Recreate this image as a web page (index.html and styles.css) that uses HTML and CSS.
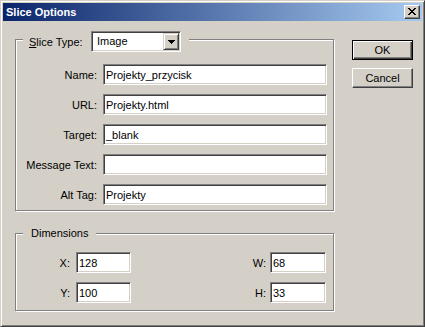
FILE: index.html
```html
<!DOCTYPE html>
<html lang="en">
<head>
  <meta charset="UTF-8" />
  <title>Slice Options</title>
  <link rel="stylesheet" href="styles.css">
</head>
<body>
  <div class="window">
    <div class="titlebar">
      <span class="title">Slice Options</span>
      <button class="close" type="button">
        <svg width="8" height="7" viewBox="0 0 8 7" shape-rendering="crispEdges">
          <path d="M0 0h2v1h-2zM6 0h2v1h-2zM1 1h2v1h-2zM5 1h2v1h-2zM2 2h4v1h-4zM3 3h2v1h-2zM2 4h4v1h-4zM1 5h2v1h-2zM5 5h2v1h-2zM0 6h2v1h-2zM6 6h2v1h-2z" fill="#000"/>
        </svg>
      </button>
    </div>

    <div class="body">
      <div class="main">
        <!-- Slice Type -->
        <div class="group group-slice">
          <div class="legend legend-slice">
            <span class="slice-label"><u>S</u>lice Type:</span>
            <div class="select">
              <span class="select-value">Image</span>
              <span class="select-btn">
                <svg width="7" height="4" viewBox="0 0 7 4" shape-rendering="crispEdges">
                  <path d="M0 0h7v1h-7zM1 1h5v1h-5zM2 2h3v1h-3zM3 3h1v1h-1z" fill="#000"/>
                </svg>
              </span>
            </div>
          </div>

          <div class="fields">
            <label class="lbl">Name:</label>
            <input class="field" type="text" value="Projekty_przycisk">
            <label class="lbl">URL:</label>
            <input class="field" type="text" value="Projekty.html">
            <label class="lbl">Target:</label>
            <input class="field" type="text" value="_blank">
            <label class="lbl">Message Text:</label>
            <input class="field" type="text" value="">
            <label class="lbl">Alt Tag:</label>
            <input class="field" type="text" value="Projekty">
          </div>
        </div>

        <!-- Dimensions -->
        <div class="group group-dims">
          <div class="legend legend-dims">Dimensions</div>
          <div class="dim-row">
            <label class="dim-lbl">X:</label>
            <input class="field dim-x" type="text" value="128">
            <label class="dim-lbl dim-lbl-r">W:</label>
            <input class="field dim-w" type="text" value="68">
          </div>
          <div class="dim-row">
            <label class="dim-lbl">Y:</label>
            <input class="field dim-x" type="text" value="100">
            <label class="dim-lbl dim-lbl-r">H:</label>
            <input class="field dim-w" type="text" value="33">
          </div>
        </div>
      </div>

      <div class="actions">
        <button class="btn btn-default" type="button">OK</button>
        <button class="btn" type="button">Cancel</button>
      </div>
    </div>
  </div>
</body>
</html>
```

FILE: styles.css
```css
/* Win2000 style dialog */
html, body {
  margin: 0;
  padding: 0;
  background: #d4d0c8;
}

body {
  font-family: "Liberation Sans", Arial, sans-serif;
  font-size: 11px;
  color: #000;
}

.window {
  width: 425px;
  height: 327px;
  box-sizing: border-box;
  border: 1px solid;
  border-color: #d4d0c8 #404040 #404040 #d4d0c8;
  box-shadow: inset 1px 1px #fff, inset -1px -1px #808080;
  padding: 2px;
  background: #d4d0c8;
}

/* title bar */
.titlebar {
  height: 18px;
  display: flex;
  align-items: center;
  justify-content: space-between;
  padding: 0 2px 0 3px;
  background: linear-gradient(to right, #0a246a, #a6caf0);
}

.title {
  color: #fff;
  font-weight: bold;
  font-size: 11px;
  line-height: 18px;
}

.close {
  width: 16px;
  height: 14px;
  padding: 0;
  box-sizing: border-box;
  border: 1px solid;
  border-color: #fff #404040 #404040 #fff;
  box-shadow: inset -1px -1px #808080;
  background: #d4d0c8;
  display: flex;
  align-items: center;
  justify-content: center;
}

.close svg {
  display: block;
  margin: 0 1px 1px 0;
}

/* body */
.body {
  display: flex;
  padding: 18px 0 0 12px;
}

.group {
  width: 319px;
  box-sizing: border-box;
  border: 1px solid #808080;
  box-shadow: 1px 1px 0 #fff, inset 1px 1px 0 #fff;
}

.group-slice {
  padding-bottom: 5px;
}

.group-dims {
  margin-top: 22px;
  padding-bottom: 7px;
}

.legend {
  width: fit-content;
  margin-left: 7px;
  background: #d4d0c8;
}

.legend-slice {
  display: flex;
  align-items: center;
  height: 21px;
  margin-top: -9px;
  padding: 0 8px 0 6px;
}

.slice-label {
  width: 57px;
  margin-right: 5px;
}

.legend-dims {
  margin-top: -7px;
  line-height: 13px;
  padding: 0 8px;
}

/* dropdown */
.select {
  display: flex;
  width: 90px;
  height: 21px;
  box-sizing: border-box;
  border: 1px solid;
  border-color: #808080 #fff #fff #808080;
  box-shadow: inset 1px 1px #404040, inset -1px -1px #d4d0c8;
  background: #fff;
  padding: 1px;
}

.select-value {
  flex: 1;
  padding-left: 4px;
  line-height: 17px;
}

.select-btn {
  width: 16px;
  height: 17px;
  box-sizing: border-box;
  border: 1px solid;
  border-color: #d4d0c8 #404040 #404040 #d4d0c8;
  box-shadow: inset 1px 1px #fff, inset -1px -1px #808080;
  background: #d4d0c8;
  display: flex;
  align-items: center;
  justify-content: center;
}

.select-btn svg {
  display: block;
}

/* text fields */
.fields {
  display: grid;
  grid-template-columns: 81px 224px;
  column-gap: 6px;
  row-gap: 9px;
  margin-top: 12px;
  align-items: center;
}

.lbl {
  text-align: right;
  white-space: nowrap;
}

.field {
  height: 21px;
  box-sizing: border-box;
  margin: 0;
  border: 1px solid;
  border-color: #808080 #fff #fff #808080;
  box-shadow: inset 1px 1px #404040, inset -1px -1px #d4d0c8;
  background: #fff;
  padding: 0 2px;
  font-family: "Liberation Sans", Arial, sans-serif;
  font-size: 11px;
  color: #000;
  outline: none;
}

.fields .field {
  width: 224px;
}

/* dimensions */
.dim-row {
  display: flex;
  align-items: center;
  padding: 0 7px 0 34px;
  margin-top: 9px;
}

.legend-dims + .dim-row {
  margin-top: 12px;
}

.dim-lbl {
  width: 20px;
  text-align: right;
  margin-right: 6px;
}

.dim-lbl-r {
  margin-left: auto;
  margin-right: 4px;
}

.dim-x {
  width: 55px;
}

.dim-w {
  width: 56px;
}

/* buttons */
.actions {
  display: flex;
  flex-direction: column;
  gap: 8px;
  margin: 1px 0 0 18px;
}

.btn {
  width: 61px;
  height: 20px;
  box-sizing: border-box;
  padding: 0;
  border: 1px solid;
  border-color: #fff #404040 #404040 #fff;
  box-shadow: inset -1px -1px #808080;
  background: #d4d0c8;
  font-family: "Liberation Sans", Arial, sans-serif;
  font-size: 11px;
  color: #000;
}

.btn-default {
  border-color: #000;
  box-shadow: inset 1px 1px #fff, inset -1px -1px #404040, inset -2px -2px #808080;
}
```
